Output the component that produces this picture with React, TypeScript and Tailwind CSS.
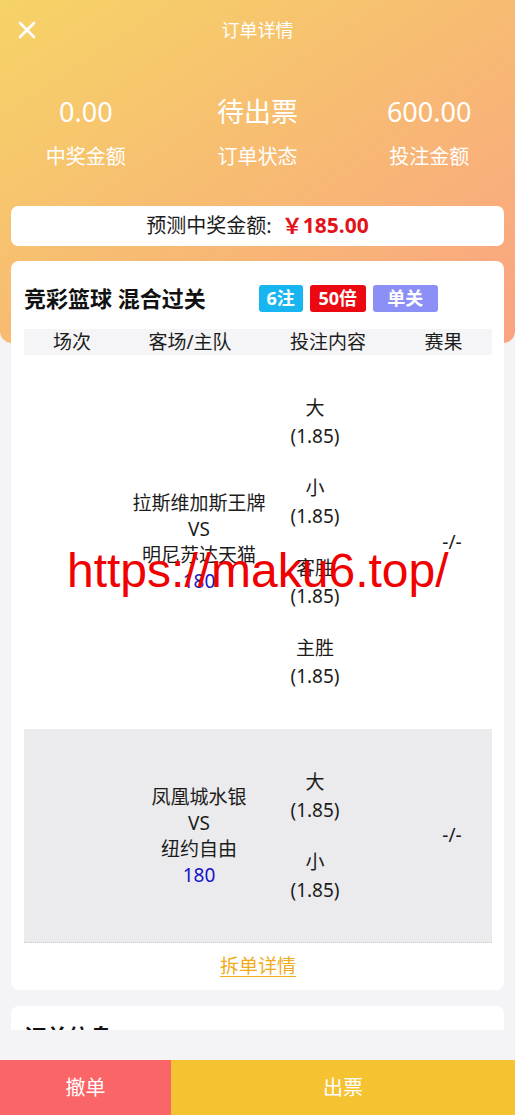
import React from "react";

const FONT = { fontFamily: '"Noto Sans", "Noto Sans CJK SC", sans-serif' };

function Bet({ name }: { name: string }) {
  return (
    <div className="flex flex-col items-center leading-[28px]">
      <span>{name}</span>
      <span>(1.85)</span>
    </div>
  );
}

function Row({
  home,
  away,
  bets,
  gray,
  h,
}: {
  home: string;
  away: string;
  bets: string[];
  gray?: boolean;
  h: string;
}) {
  return (
    <div
      className={`grid grid-cols-[106px_138px_94px_129px] items-center text-[19px] text-[#1c1c1c] ${
        gray ? "bg-[#ebebed] border-b border-dotted border-[#c9c9cc]" : "bg-white"
      } ${h}`}
    >
      <div />
      <div className="flex flex-col items-center leading-[26px] whitespace-nowrap">
        <span>{home}</span>
        <span>VS</span>
        <span>{away}</span>
        <span className="text-[#1414c8]">180</span>
      </div>
      <div className="flex flex-col items-center gap-[24px]">
        {bets.map((b, i) => (
          <Bet key={i} name={b} />
        ))}
      </div>
      <div className="pl-[51px] text-center">-/-</div>
    </div>
  );
}

export default function App() {
  return (
    <div
      className="relative flex h-[1115px] w-[515px] flex-col overflow-hidden bg-[#f4f3f5]"
      style={FONT}
    >
      <div className="h-[1030px] overflow-hidden">
        {/* gradient header */}
        <div className="h-[343px] rounded-b-[12px] bg-linear-to-br from-[#f6d366] via-[#f7bb72] to-[#faa382] text-white">
          <div className="relative flex h-[60px] items-center justify-center">
            <svg
              className="absolute left-[18px] top-[21px]"
              width="18"
              height="18"
              viewBox="0 0 18 18"
              fill="none"
              stroke="white"
              strokeWidth="2.6"
              strokeLinecap="round"
            >
              <path d="M2 2L16 16M16 2L2 16" />
            </svg>
            <span className="text-[18px]">订单详情</span>
          </div>
          <div className="grid grid-cols-3 pt-[34px] text-center">
            <div className="flex flex-col items-center">
              <span className="text-[27px] leading-[36px]">0.00</span>
              <span className="mt-[13px] text-[20px] leading-[28px]">中奖金额</span>
            </div>
            <div className="flex flex-col items-center">
              <span className="text-[27px] leading-[36px]">待出票</span>
              <span className="mt-[13px] text-[20px] leading-[28px]">订单状态</span>
            </div>
            <div className="flex flex-col items-center">
              <span className="text-[27px] leading-[36px]">600.00</span>
              <span className="mt-[13px] text-[20px] leading-[28px]">投注金额</span>
            </div>
          </div>
          <div className="mx-[11px] mt-[35px] flex h-[40px] items-center justify-center rounded-[7px] bg-white">
            <span className="text-[20px] text-[#1c1c1c]">预测中奖金额:</span>
            <span className="ml-[10px] text-[21px] font-bold text-[#e3131b]">￥185.00</span>
          </div>
        </div>

        {/* main card */}
        <div className="relative mx-[11px] mt-[-82px] rounded-[8px] bg-white pl-[13px] pr-[12px] pt-[24px]">
          <div className="flex h-[27px] items-center">
            <span className="text-[22px] font-bold text-[#111]">竞彩篮球 混合过关</span>
            <div className="ml-[53px] flex gap-[7px] text-[18px] font-bold text-white">
              <span className="flex h-[27px] w-[44px] items-center justify-center rounded-[3px] bg-[#17b6f1]">6注</span>
              <span className="flex h-[27px] w-[56px] items-center justify-center rounded-[3px] bg-[#ec0810]">50倍</span>
              <span className="flex h-[27px] w-[65px] items-center justify-center rounded-[3px] bg-[#8b8ff6]">单关</span>
            </div>
          </div>
          <div className="mt-[17px] grid h-[26px] grid-cols-[96px_140px_136px_95px] items-center bg-[#f5f5f7] text-center text-[19px] leading-[26px] text-[#1c1c1c]">
            <span>场次</span>
            <span>客场/主队</span>
            <span>投注内容</span>
            <span>赛果</span>
          </div>
          <Row
            home="拉斯维加斯王牌"
            away="明尼苏达天猫"
            bets={["大", "小", "客胜", "主胜"]}
            h="h-[374px]"
          />
          <Row home="凤凰城水银" away="纽约自由" bets={["大", "小"]} gray h="h-[214px]" />
          <div className="flex h-[47px] items-center justify-center">
            <span className="text-[19px] text-[#f0aa1a] underline underline-offset-[3px]">拆单详情</span>
          </div>
        </div>

        {/* second card */}
        <div className="mx-[11px] mt-[16px] h-[120px] rounded-[8px] bg-white px-[13px] pt-[14px]">
          <span className="text-[22px] font-bold text-[#111]">订单信息</span>
        </div>
      </div>

      <div className="h-[30px] bg-[#f4f3f5]" />
      <div className="flex h-[55px] text-[20px] text-white">
        <div className="flex w-[171px] items-center justify-center bg-[#fa6568]">撤单</div>
        <div className="flex flex-1 items-center justify-center bg-[#f5c232]">出票</div>
      </div>

      {/* watermark */}
      <div
        className="pointer-events-none absolute left-[67px] top-[541px] text-[48px] leading-[60px] text-[#f00000]"
        style={{ fontFamily: '"Liberation Sans", Arial, sans-serif' }}
      >
        https://maku6.top/
      </div>
    </div>
  );
}
